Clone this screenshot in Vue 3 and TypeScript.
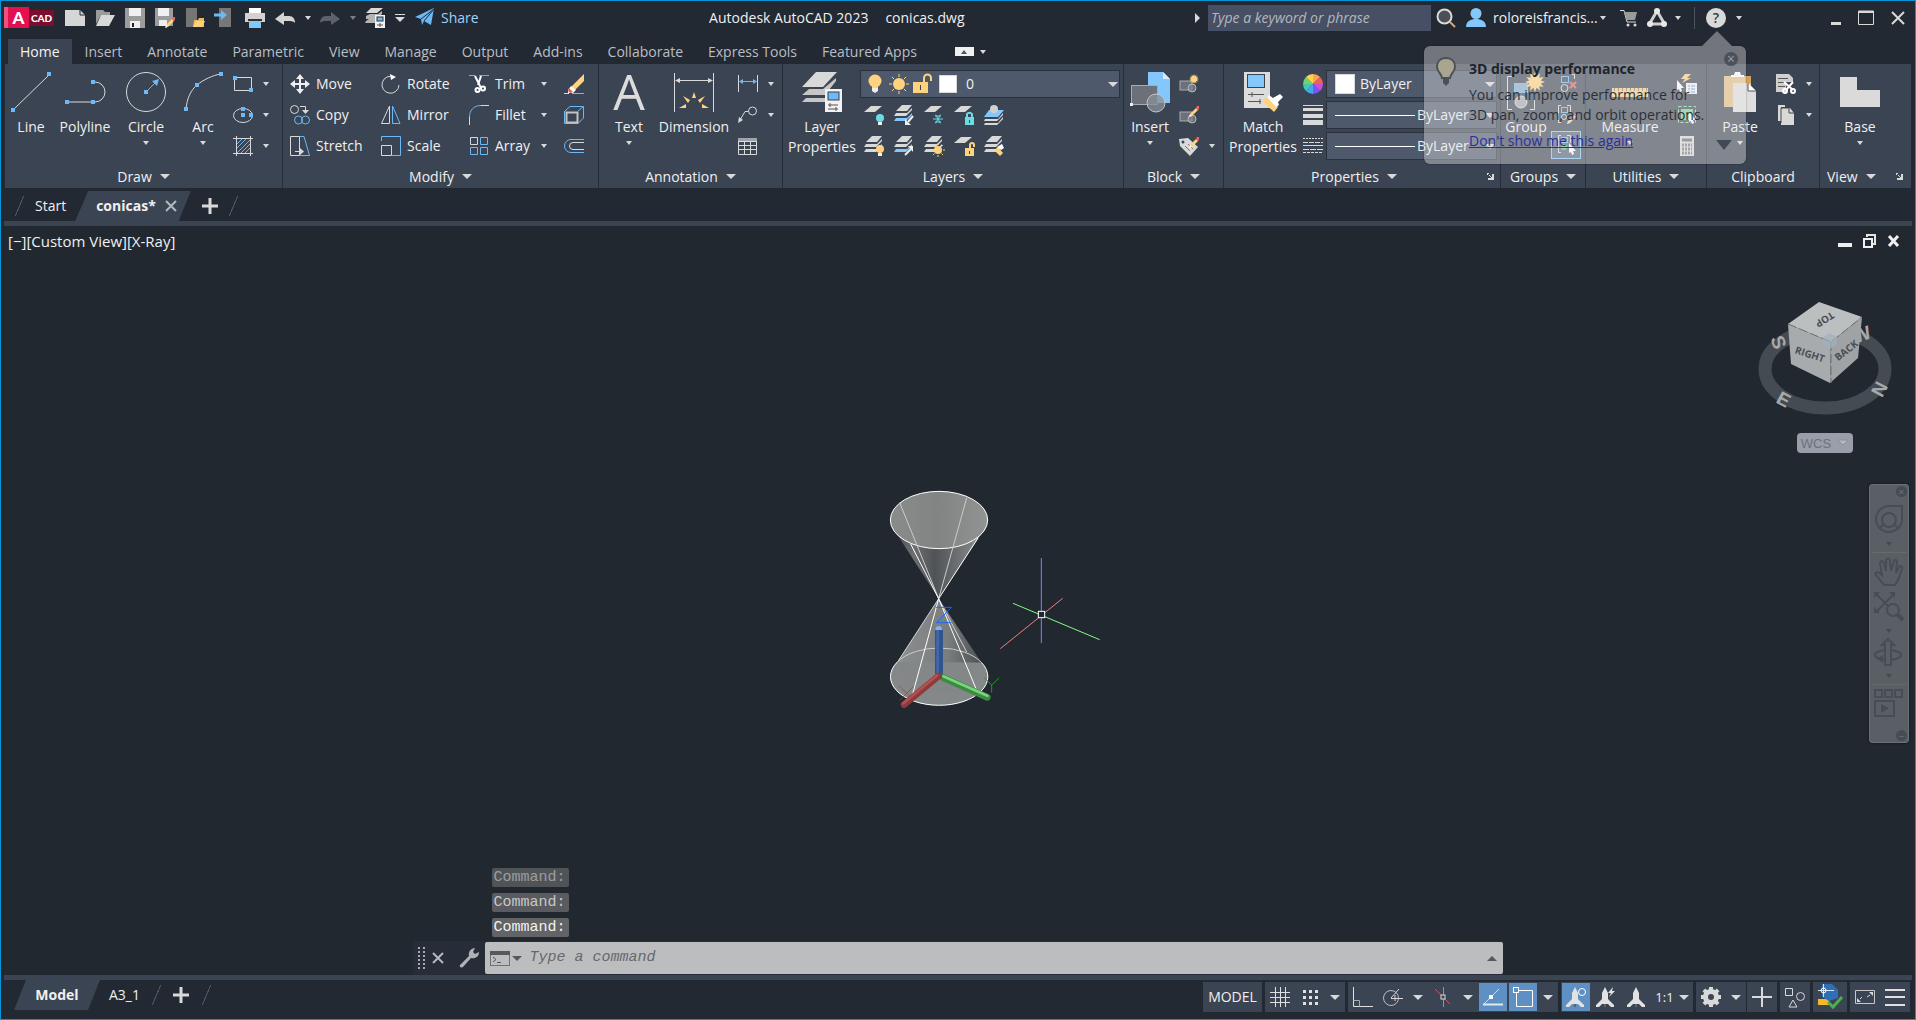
<script setup lang="ts">
import { h, ref, type FunctionalComponent } from 'vue'

const G = '#d9d9d9'
const B = '#6cb9f5'
const Y = '#ffd27d'
const sq = (x: number, y: number) => `<rect x="${x - 2}" y="${y - 2}" width="4" height="4" fill="${B}"/>`
const line = (d: string, c = G, w = 1) => `<path d="${d}" fill="none" stroke="${c}" stroke-width="${w}"/>`
const fill = (d: string, c = G) => `<path d="${d}" fill="${c}"/>`
const sheet = (y: number, c = G) => fill(`M7 ${y}H18L11 ${y + 6}H0Z`, c)
const stack = (c = G) =>
  fill('M8 0H18L13 6H2Z') + fill('M2 8H13L18 3V5L12 11H0Z') + fill('M2 13H13L18 8V10L12 16H0Z', c)
const bulb = (c: string) =>
  `<circle cx="16" cy="13" r="4" fill="${c}"/><rect x="14" y="17" width="4" height="3" fill="#eee"/>`
const rays = (cx: number, cy: number, a: number, b: number, n: number) =>
  Array.from({ length: n }, (_, i) => {
    const t = (i * 2 * Math.PI) / n
    const p = (r: number) => `${(cx + r * Math.cos(t)).toFixed(1)} ${(cy + r * Math.sin(t)).toFixed(1)}`
    return `M${p(a)}L${p(b)}`
  }).join('')
const star = (cx: number, cy: number, R: number, r: number) =>
  `<polygon fill="${Y}" points="${Array.from({ length: 24 }, (_, i) => {
    const t = (i * Math.PI) / 12
    const q = i % 2 ? r : R
    return `${(cx + q * Math.cos(t)).toFixed(1)},${(cy + q * Math.sin(t)).toFixed(1)}`
  }).join(' ')}"/>`
const pencil = fill('M11 9L17 3L19 5L13 11Z', Y) + fill('M17 3L18 1L20 1V4L19 5Z', '#f06464') + fill('M11 9L13 11L10 12Z', '#fff')
const block = `<rect x="1" y="7" width="12" height="9" fill="#6b7079" stroke="#a9adb3"/><circle cx="13" cy="14" r="4" fill="#80858d" fill-opacity=".7" stroke="#b4b8bd"/>`
const cursor = (x: number, y: number) =>
  fill(`M${x} ${y}L${x + 7} ${y + 8}H${x + 4}L${x + 5} ${y + 11}L${x + 3} ${y + 12}L${x + 2} ${y + 9}L${x} ${y + 10}Z`, '#fff')
const lockBody = (c: string, open: boolean) =>
  `<rect x="11" y="12" width="9" height="8" fill="${c}"/><rect x="15" y="15" width="1" height="3" fill="#3b4453"/>` +
  line(open ? 'M16 12V9a2 2 0 0 1 4 0V11' : 'M13 12V9a3 3 0 0 1 5 0V12', c, 2)
const scale = (x: number) => `<path transform="translate(${x} 0)" d="M9 0L12 6V12L18 18V20H15L12 17H6L3 20H0V18L6 12V6Z" fill="#e2e2e2"/><path transform="translate(${x} 0)" d="M8 17H10V20H8Z" fill="#5a6270"/>`

const icons: Record<string, string> = {
  line: line('M2 38L39 2') + sq(2, 38) + sq(38, 2),
  polyline: line('M2 30H30a10 10 0 0 0 0 -20H27') + sq(2, 30) + sq(28, 30) + sq(28, 10),
  circle: `<circle cx="20" cy="20" r="19.5" fill="none" stroke="${G}"/>` + sq(20, 20) + line('M20 20L31 9', B) + fill('M33 7L26 9L31 14Z', B),
  arc: line('M3 37C4 26 8 18 14 13S30 3 38 2') + sq(3, 37) + sq(14, 13) + sq(38, 2),
  rect: line('M1.500 3.500H18.500V16.500H1.500Z') + sq(2, 4) + sq(18, 16),
  ellipse: `<ellipse cx="10" cy="10.500" rx="9.500" ry="7" fill="none" stroke="${G}"/>` + sq(10, 4) + sq(10, 10) + sq(18, 10),
  hatch: line('M3.500 0V20M17.500 0V20M0 2.500H20M0 17.500H20') + line('M4 8L9 3M4 12L13 3M4 17L17 4M8 17L17 8M12 17L17 12', B),
  move: fill('M10 0L14 5H11V9H15V6L20 10L15 14V11H11V15H14L10 20L6 15H9V11H5V14L0 10L5 6V9H9V5H6Z', '#f0f0f0'),
  copy: `<circle cx="4.500" cy="4.500" r="4" fill="none" stroke="${G}"/><g fill="none" stroke="${B}"><circle cx="8.500" cy="15" r="4"/><circle cx="15.500" cy="15" r="4"/></g>` + line('M10 1.500H15.500V6') + fill('M12 5H19L15.500 9Z'),
  stretch: line('M.5 .5H9.500V19.500H.5Z') + line('M10 .5H14L19.500 19.500H10', B) + line('M5 15.500H11') + fill('M10 12L14 15.500L10 19Z'),
  rotate: line('M13 3A8.500 8.500 0 1 0 18 11') + fill('M9 0L15 3L10 6Z', '#fff'),
  mirror: line('M8.500 1V18.500H.5Z') + line('M11.500 1V18.500H19Z', B),
  scale: line('M.5 5V.5H19.500V19.500H11', B) + line('M.5 9.500H10.500V19.500H.5Z'),
  trim: line('M0 1.500H6', B) + line('M10 1.500H20', '#9aa0a8') + line('M6 2L12 14M12 2L9 11', '#fff', 2) + `<g fill="none" stroke="#fff" stroke-width="2"><circle cx="8.500" cy="16" r="2"/><circle cx="14" cy="14.500" r="2"/></g>`,
  fillet: line('M12 .5H20M.5 12V20') + line('M.5 12C.5 5 5 .5 12 .5', B),
  array: line('M1.500 1.500H8.500V8.500H1.500Z') + line('M11.500 1.500H18.500V8.500H11.500ZM1.500 11.500H8.500V18.500H1.500ZM11.500 11.500H18.500V18.500H11.500Z', B),
  erase: line('M0 19.500H5') + line('M8 19.500H20', B) + fill('M7 13L20 0V7L11 16Z', Y) + fill('M7 12L12 16L9 19H4V16Z', '#fff') + fill('M5 14L9 18L6 19L4 17Z', '#f05a5a'),
  explode: line('M.5 6.500L6 1.500H19.500V13L14 18.500M14 6L19 2M.5 6V18.500H14', B) + line('M2.500 7.500H13.500V17.500H2.500Z', '#c4c4c4', 2),
  offset: line('M20 3.500H7a6.500 6.500 0 0 0 0 13H20', B) + line('M20 6.500H9a3.500 3.500 0 0 0 0 7H20'),
  dim: line('M.5 1V40M39.500 1V40') + line('M2 8.500H38') + fill('M1 8.500L6 6V11ZM39 8.500L34 6V11Z') +
    `<g fill="${Y}"><path d="M18 26L20 20L22 26Z"/><path d="M9 24L16 28L14 31Z"/><path d="M31 24L24 28L26 31Z"/><path d="M5 36L12 32V36Z"/><path d="M35 36L28 32V36Z"/></g>`,
  linear: line('M.5 1V18M19.500 1V18') + line('M2 7.500H18', B) + fill('M1 7.500L5 5V10ZM19 7.500L15 5V10Z', B),
  leader: `<circle cx="14.500" cy="6" r="4" fill="none" stroke="${G}"/>` + line('M10 6.500H7L2 15') + fill('M0 18L1 12L5 15Z'),
  table: line('M.5 2.500H18.500V18.500H.5ZM0 5.500H19M0 9.500H19M0 13.500H19M6.500 6V18M12.500 6V18') + fill('M0 2H19V5H0Z', '#a0a4aa'),
  layers: fill('M14 0H35L21 15H0Z') + fill('M0 23L7 17H21L34 6V9L23 23ZM0 30L4 26H23V30Z', '#c6c6c6') +
    `<rect x="23" y="17" width="17" height="23" fill="#f2f2f2"/><rect x="26" y="20" width="11" height="8" fill="#6cb9f5" stroke="#39424f"/><path d="M26 33H36M26 37H36" stroke="#555"/><path d="M28 31V35M34 35V39" stroke="#555"/>`,
  bulbBig: `<circle cx="10" cy="7" r="6.500" fill="${Y}"/><path d="M7 12H13V14H7Z" fill="${Y}"/><path d="M7 14H13V17L10 19L7 17Z" fill="#eee"/>`,
  sun: `<circle cx="10" cy="10" r="6" fill="${Y}"/>` + line(rays(10, 10, 7, 10, 8), Y),
  lockOpen: `<path d="M0 8H15V19H0Z" fill="${Y}"/>` + line('M11 8V4a3.500 3.500 0 0 1 7 0V7', Y, 2) + line('M7.500 11V16', '#3b4453'),
  lyOff: sheet(1) + bulb('#6ddbe3'),
  lyIso: stack('#84c8fb') + fill('M11 20V14L17 20Z', '#eee') + line('M14 17L19 11', '#eee', 2),
  lyFreeze: sheet(1) + line(rays(14, 14, 0, 5, 6) + 'M11 11H17M11 17H17', '#6ddbe3'),
  lyLock: sheet(1) + lockBody('#6ddbe3', false),
  lyMatch: fill('M5 5H20L14 12H0Z', '#84c8fb') + `<circle cx="10" cy="4" r="4" fill="#d0d0d0"/>` + fill('M1 14H14L19 8V10L13 16H0ZM1 18H14L19 12V14L13 20H0Z'),
  lyOn: stack() + bulb(Y),
  lyUniso: stack('#84c8fb') + fill('M14 10H19V16Z', '#eee') + line('M11 19L17 13', '#eee', 2),
  lyThaw: stack() + `<circle cx="14" cy="14" r="4" fill="${Y}"/>` + line(rays(14, 14, 5, 7, 8), Y),
  lyUnlock: sheet(1) + lockBody(Y, true),
  lyWalk: stack() + fill('M10 14L14 11L19 17L16 20Z', Y) + fill('M13 11L18 8L20 12L17 14Z', '#fff'),
  insert: fill('M18 0H33L40 7V31H18Z', '#84c8fb') + fill('M33 0V7H40Z', '#d6ecfd') +
    `<rect x="1.500" y="13.500" width="26" height="19" fill="#6b7079" stroke="#a9adb3"/><circle cx="26" cy="31" r="9" fill="#8b9098" fill-opacity=".75" stroke="#c4c7cb"/><rect x="0" y="31" width="3" height="3" fill="#eee"/>`,
  blkNew: block + star(15, 5, 5, 3),
  blkEdit: block + pencil,
  blkAttr: fill('M0 3L9 2L19 11L11 20L1 10Z') + `<circle cx="4" cy="6" r="1.500" fill="#3b4453"/>` + line('M6 10L11 15M9 8L14 13', '#777') + pencil,
  match: `<rect x="1" y="0" width="26" height="36" fill="#dcdcdc"/><rect x="4.500" y="2.500" width="17" height="13" fill="#84c8fb" stroke="#39424f"/><path d="M5 22.500H21M5 29.500H18M9 20V25M17 27V32" stroke="#555"/>` + fill('M19 29L25 24L35 35L31 40Z', Y) + fill('M26 23L30 26L37 22L40 25L35 30L36 33L33 35L24 25Z', '#fff'),
  wheel: ['#ffa64d', '#f0605a', '#c74fd6', '#7a55f5', '#42a5f5', '#3fc9b0', '#6fd36f', '#ffd24d'].map((c, i) => {
    const p = (k: number) => `${(10 + 10 * Math.sin((k * Math.PI) / 4)).toFixed(2)} ${(10 - 10 * Math.cos((k * Math.PI) / 4)).toFixed(2)}`
    return `<path d="M10 10L${p(i)}A10 10 0 0 1 ${p(i + 1)}Z" fill="${c}"/>`
  }).join(''),
  weights: fill('M0 0H20V1H0ZM0 3H20V6H0ZM0 9H20V13H0ZM0 15H20V20H0Z'),
  types: line('M0 2.500H20').replace('/>', ' stroke-dasharray="2 1"/>') + line('M0 6.500H20').replace('/>', ' stroke-dasharray="5 1"/>') + line('M0 9.500H20') + line('M0 13.500H20').replace('/>', ' stroke-dasharray="6 1"/>') + line('M0 16.500H20').replace('/>', ' stroke-dasharray="3 1"/>'),
  group: line('M6 4.500H1.500V37.500H6M24 37.500H28.500V22') + `<rect x="8.500" y="11.500" width="13" height="9" fill="#86a9c8" stroke="${B}"/><circle cx="15" cy="30" r="6" fill="#a4a8ad" stroke="${G}"/>` + star(29, 10, 10, 6),
  ungroup: line('M16 .5H18.500V5', G) + `<rect x="5.500" y="2.500" width="7" height="6" fill="none" stroke="${B}"/><circle cx="8.500" cy="14" r="3.500" fill="none" stroke="${G}"/>` + line('M14 8L20 14M20 8L14 14', '#f0605a', 2),
  groupEdit: line('M5 .5H2.500V17.500H5M11 .5H14.500V8') + `<rect x="5.500" y="2.500" width="6" height="5" fill="none" stroke="${B}"/><circle cx="8" cy="12" r="2.500" fill="none" stroke="${G}"/>` + `<g transform="translate(1 7)">${pencil}</g>`,
  groupSel: line('M5 .5H2.500V17.500H5M11 .5H14.500V8') + `<rect x="5.500" y="2.500" width="6" height="5" fill="none" stroke="${B}"/><circle cx="8" cy="12" r="3" fill="#6bbf8c"/>` + cursor(13, 8),
  measure: fill('M0 16H36V25H0Z', '#f6cf86') + line('M2.500 16V19M6.500 16V19M10.500 16V19M14.500 16V19M18.500 16V19M22.500 16V19M26.500 16V19M30.500 16V19M34.500 16V19', '#8a7550'),
  quick: cursor(0, 6) + fill('M8 0H14L10 4H14L5 9L8 5H4Z', Y) + `<rect x="9" y="9" width="11" height="11" fill="#f2f2f2"/><path d="M11 12H13M14 12H18M11 15H13M14 15H18M11 18H13M14 18H18" stroke="#4a90d0"/>`,
  selAll: `<rect x="1.500" y="1.500" width="17" height="16" fill="none" stroke="#8fe0a8" stroke-dasharray="3 2"/><rect x="4" y="4" width="12" height="11" fill="#6fce92"/>` + cursor(12, 7),
  calc: `<rect x="3" y="0" width="14" height="20" fill="${G}"/><path d="M5 4H15" stroke="#666" stroke-width="3"/><path d="M5 9H15M5 13H15M5 17H15" stroke="#777" stroke-width="3" stroke-dasharray="2 1"/>`,
  paste: fill('M4 4H31V35H4Z', '#e3bd84') + fill('M25 4H31V11H25Z', '#d5a35f') + fill('M11 5V3H14L15 0H20L21 3H24V5Z', '#fff') + fill('M13 11H28L36 19V40H13Z', '#dedede') + fill('M28 11V19H36Z', '#fff') + line('M28 11V19H36', '#555'),
  cut: fill('M0 0H13L17 4V8H10V18H0Z', '#cfcfcf') + line('M2 4.500H12M2 8.500H12M2 12.500H9', '#555') + line('M8 8L17 16M17 8L10 16', '#fff', 2) + `<g fill="none" stroke="#fff" stroke-width="2"><circle cx="9" cy="17" r="2"/><circle cx="17" cy="17" r="2"/></g>`,
  copyClip: fill('M2 0H9V2H5V16H2Z') + fill('M5 3H14L18 8V20H5Z') + line('M5 18V3H13', '#444') + line('M13 3V8H18', '#444'),
  base: fill('M0 5H17V18H40V35H0Z', '#dadada'),
  fnew: fill('M0 2H15L20 7V18H0Z', '#d6d6d6') + line('M15 2V7H20', '#222933'),
  fopen: fill('M1 2H8L10 4H15V7H6L1 16Z', '#9b9b9b') + fill('M6 7H20L14 18H1Z', '#d8d8d8'),
  fsave: fill('M0 0H20V20H0Z', '#9c9c9c') + fill('M4 0H16V8H4Z', '#f0f0f0') + fill('M5 13H15V20H5Z', '#eee') + fill('M7 15H9V19H7Z', '#222'),
  fsaveas: fill('M0 0H18V18H0Z', '#9c9c9c') + fill('M3 0H14V8H3Z', '#f0f0f0') + fill('M4 12H12V18H4Z', '#eee') + `<g transform="translate(0 8)">${pencil}</g>`,
  webopen: fill('M1 0H12V19H1Z', '#757575') + fill('M9 12H13L14 10H19V19H8Z', '#f0b955') + fill('M11 13H20L17 19H8Z', Y),
  websave: fill('M4 0H16V19H4Z', '#777') + line('M-1 7H7', B, 3) + fill('M6 2L12 7L6 12Z', B),
  print: fill('M4 0H16V5H4Z', '#fff') + fill('M0 5H20V14H0Z', '#d2d2d2') + fill('M3 11H17V13H3Z', '#333') + fill('M4 13H16V20H4Z', '#84c8fb'),
  undo: fill('M0 11L9 4V8H14C18 8 20 11 20 15C18 13 16 13 9 13V17Z', '#d4d4d4'),
  redo: fill('M20 11L11 4V8H6C2 8 0 11 0 15C2 13 4 13 11 13V17Z', '#5d626a'),
  batch: fill('M6 0H18L12 5H1Z') + fill('M1 8L5 6H13L17 3V6L10 11H1ZM1 13L4 11H10V15H0Z', '#b5b5b5') + `<rect x="10" y="7" width="10" height="13" fill="#f2f2f2"/><rect x="12" y="9" width="6" height="4" fill="${B}" stroke="#333"/><path d="M12 17H18M15 15V19" stroke="#555"/>`,
  share: fill('M0 9L19 0L16 17L9 13L7 17L6 11Z', B) + line('M6 11L19 1L9 13', '#222933'),
  lens: `<circle cx="7.500" cy="8.500" r="7" fill="#4b4f58" stroke="${G}" stroke-width="2"/>` + line('M13 14L18 19', '#d9a76a', 2),
  user: `<circle cx="10" cy="5.500" r="5.500" fill="#84c8fb"/>` + fill('M0 19C0 13 5 11 10 11S20 13 20 19Z', '#84c8fb'),
  cart: line('M0 2.500H4L7 14H16', G) + fill('M4 4H17L15 12H7Z', '#9a9a9a') + `<circle cx="8" cy="17" r="1.500" fill="${G}"/><circle cx="15" cy="17" r="1.500" fill="${G}"/>`,
  aapp: line('M10 3L3 15M10 3L17 15M3 16H17', '#cfcfcf', 3) + `<g fill="#e8e8e8"><circle cx="10" cy="3" r="3"/><circle cx="3" cy="16" r="3"/><circle cx="17" cy="16" r="3"/></g>`,
  min: fill('M1 12H11V15H1Z'),
  max: line('M.5 1H15.500V14.500H.5Z') + line('M0 2H16', G, 2),
  close: line('M1 2L13 14M13 2L1 14', G, 2),
  vmin: fill('M0 9H14V13H0Z', '#eee'),
  vrestore: line('M4 3V1H12V10H10', '#e4e4e4', 2) + line('M1 5H9V13H1Z', '#f0f0f0', 2),
  vclose: line('M2 2L11 12M11 2L2 12', '#f0f0f0', 3),
  cross: line('M0 0L10 10M10 0L0 10', '#b4b8be', 2),
  plus: line('M8 0V16M0 8H16', G, 3),
  launch: line('M0 .5H2M.5 1V2M2 2L6 6', G) + fill('M7 1V7H1V5H5V1Z'),
  grid: line('M5.500 0V20M10.500 0V20M15.500 0V20M0 5.500H20M0 10.500H20M0 15.500H20', '#e0e0e0'),
  snap: [3, 9, 15].map((x) => [3, 9, 15].map((y) => fill(`M${x} ${y}h3v3h-3Z`, '#e0e0e0')).join('')).join(''),
  ortho: line('M.5 0V19.500H20', '#e0e0e0') + line('M.5 13.500H6.500V19.500', '#a9adb3'),
  polar: `<circle cx="8" cy="11" r="7.500" fill="none" stroke="#b9bcc1"/>` + line('M8 11.500H20M8 11L16 2') + line('M12 8V14'),
  iso: line('M2 2L17 17', '#c9555c') + line('M10.500 0V20', '#4fbf6b') + `<rect x="8" y="8" width="4" height="4" fill="#3b4453" stroke="#ddd"/>`,
  otrack: line('M1 17L16 2') + line('M0 17.500H20', '#dfe7f0', 2) + fill('M6 8H10V12H6Z', '#fff'),
  osnap: line('M3.500 3.500H19.500V19.500H3.500Z', '#fff') + `<rect x=".5" y=".5" width="5" height="5" fill="#5f90c3" stroke="#fff"/>`,
  ann1: scale(0) + `<circle cx="16" cy="5" r="3.500" fill="none" stroke="#fff"/>`,
  ann2: scale(0) + fill('M17 0L12 6H15L13 10L19 4H16Z', '#e2e2e2'),
  ann3: scale(1),
  gear: `<circle cx="10" cy="10" r="5.500" fill="none" stroke="${G}" stroke-width="5"/>` + line(rays(10, 10, 7, 10, 8), G, 4),
  bigplus: line('M10 0V20M0 10H20', G, 2),
  shapes: line('M.5 1.500H7.500V8.500H.5Z') + `<circle cx="15.500" cy="9.500" r="4" fill="none" stroke="${G}"/>` + line('M8 13L12 20H4Z'),
  dwg: fill('M1 15H12V21H1Z', '#f5b82a') + fill('M5 0H15L21 6V14L12 17L5 13Z', '#2f6fb5') + line('M1 6.500H17M6.500 0V13', '#cfe4fa') + `<circle cx="6.500" cy="6.500" r="2.500" fill="none" stroke="#fff"/>` + line('M11 18L16 23L25 13', '#4fae4f', 3),
  full: line('M.5 3.500H19.500V16.500H.5Z', '#c8c8c8') + fill('M14 5H18V9ZM2 11V15H6Z') + line('M15 8L12 10M5 12L7 10'),
  menu: line('M0 3H20M0 10H20M0 18H20', '#e0e0e0', 2),
  wrench: fill('M1 17L10 8C9 4 12 0 16 0L14 4L16 6L20 4C20 9 16 11 12 10L4 19C2 20 0 19 1 17Z', '#aeb2b6'),
  terminal: `<rect x=".5" y=".5" width="19" height="14" fill="none" stroke="#6d7074"/><path d="M0 0H20V4H0Z" fill="#55585c"/><path d="M3 6L6 8.500L3 11M7 11.500H11" fill="none" stroke="#55585c"/>`,
  bulbTip: `<path d="M10 1C4 1 1 5 1 10C1 15 6 17 6 21H14C14 17 19 15 19 10C19 5 16 1 10 1Z" fill="#a9a58f" stroke="#4d5157" stroke-width="2"/><path d="M7 21H13V26L10 29L7 26Z" fill="#4d5157"/>`,
  nwheel: `<path d="M15 1H28V15A13 13 0 1 1 15 1Z" fill="none" stroke="#474d56" stroke-width="2"/><circle cx="15" cy="15" r="7" fill="none" stroke="#474d56" stroke-width="2"/><path d="M9 20L5 24M21 20L25 24" stroke="#474d56" stroke-width="2"/>`,
  nhand: `<path d="M9 27C6 23 4 20 1 17C2 14 5 15 8 18L6 6C7 3 9 4 10 6L12 14L12 3C13 1 15 1 16 3L17 14L20 4C21 2 23 3 23 5L22 16L25 10C27 8 29 9 28 12L24 23L21 28H11Z" fill="none" stroke="#474d56" stroke-width="2"/>`,
  nzoom: `<path d="M2 2L20 20M20 2L2 20" stroke="#474d56" stroke-width="2"/><path d="M0 0H6L0 6ZM21 0V6L15 0ZM0 21V15L6 21Z" fill="#474d56"/><circle cx="19" cy="18" r="6" fill="#5a5f65" stroke="#474d56" stroke-width="2"/><path d="M23 22L29 28" stroke="#474d56" stroke-width="4"/>`,
  norbit: `<ellipse cx="14" cy="17" rx="13" ry="5" fill="none" stroke="#474d56" stroke-width="2"/><path d="M11 27V7H8L14 1L20 7H17V27Z" fill="#5a5f65" stroke="#474d56" stroke-width="2"/><path d="M3 21L9 17V25Z" fill="#474d56"/>`,
  nmotion: `<path d="M1 1H8V8H1ZM11 1H18V8H11ZM21 1H28V8H21ZM1 12H20V27H1Z" fill="none" stroke="#474d56" stroke-width="2"/><path d="M7 15L15 19.500L7 24Z" fill="#474d56"/>`,
}

interface IcoProps { n: string; w?: number; hh?: number }
const Ico: FunctionalComponent<IcoProps> = (p) =>
  h('svg', {
    class: 'ico', width: p.w ?? 20, height: p.hh ?? p.w ?? 20,
    viewBox: `0 0 ${p.w ?? 20} ${p.hh ?? p.w ?? 20}`, 'aria-hidden': 'true', innerHTML: icons[p.n],
  })
Ico.props = ['n', 'w', 'hh']

const ribbonTabs = ['Home', 'Insert', 'Annotate', 'Parametric', 'View', 'Manage', 'Output', 'Add-ins', 'Collaborate', 'Express Tools', 'Featured Apps']
const activeTab = ref('Home')
const quick = [['fnew', 'New'], ['fopen', 'Open'], ['fsave', 'Save'], ['fsaveas', 'Save As'], ['webopen', 'Open from Web'], ['websave', 'Save to Web'], ['print', 'Plot'], ['undo', 'Undo']]
const modify = [
  [['move', 'Move'], ['copy', 'Copy'], ['stretch', 'Stretch']],
  [['rotate', 'Rotate'], ['mirror', 'Mirror'], ['scale', 'Scale']],
]
const modifySplit = [['trim', 'Trim'], ['fillet', 'Fillet'], ['array', 'Array']]
const layerRows = [
  [['lyOff', 'Off'], ['lyIso', 'Isolate'], ['lyFreeze', 'Freeze'], ['lyLock', 'Lock'], ['lyMatch', 'Match Layer']],
  [['lyOn', 'Turn All Layers On'], ['lyUniso', 'Unisolate'], ['lyThaw', 'Thaw'], ['lyUnlock', 'Unlock'], ['lyWalk', 'Change to Current']],
]
const history = ['Command:', 'Command:', 'Command:']
const keyword = ref('')
const command = ref('')
</script>

<template>
  <div class="app">
    <header class="titlebar">
      <button class="logo" aria-label="Application menu"><span class="logo-a">A</span><span class="logo-cad">CAD</span></button>
      <div class="quick">
        <button v-for="q in quick" :key="q[0]" :aria-label="q[1]"><Ico :n="q[0]" /></button>
        <button class="tiny" aria-label="Undo list"><i class="car" /></button>
        <button aria-label="Redo"><Ico n="redo" /></button>
        <button class="tiny" aria-label="Redo list"><i class="car dim" /></button>
        <button aria-label="Batch Plot"><Ico n="batch" /></button>
        <button class="custom" aria-label="Customize Quick Access Toolbar"><i class="car big" /></button>
        <button class="share"><Ico n="share" />Share</button>
      </div>
      <h1 class="doc-title"><span>Autodesk AutoCAD 2023</span><span>conicas.dwg</span></h1>
      <button class="expand" aria-label="Collapse search"><i class="car right" /></button>
      <input v-model="keyword" class="search" type="search" placeholder="Type a keyword or phrase" aria-label="Search" />
      <button class="lens" aria-label="Find"><Ico n="lens" /></button>
      <button class="user"><Ico n="user" /><span>roloreisfrancis...</span><i class="car" /></button>
      <button class="cart" aria-label="App Store"><Ico n="cart" :w="18" :hh="20" /></button>
      <button class="apps" aria-label="Autodesk App Store"><Ico n="aapp" /><i class="car" /></button>
      <i class="vsep" />
      <div class="help">
        <button class="help-btn" aria-label="Help">?</button>
        <aside class="balloon">
          <Ico class="tip-bulb" n="bulbTip" :w="20" :hh="30" />
          <h2>3D display performance</h2>
          <p>You can improve performance for<br />3D pan, zoom, and orbit operations.</p>
          <a href="#">Don't show me this again</a>
          <button class="tip-close" aria-label="Close notification">×</button>
          <i class="tip-more" />
        </aside>
      </div>
      <button class="help-more" aria-label="Help menu"><i class="car" /></button>
      <div class="win">
        <button aria-label="Minimize"><Ico n="min" :w="11" :hh="16" /></button>
        <button aria-label="Maximize"><Ico n="max" :w="16" /></button>
        <button aria-label="Close"><Ico n="close" :w="14" :hh="16" /></button>
      </div>
    </header>

    <nav class="rtabs">
      <button v-for="t in ribbonTabs" :key="t" :class="{ on: t === activeTab }" @click="activeTab = t">{{ t }}</button>
      <button class="collapse" aria-label="Minimize ribbon"><span><i class="car up" /></span><i class="car" /></button>
    </nav>

    <section class="ribbon">
      <div class="panel">
        <div class="body">
          <button class="big w52"><Ico n="line" :w="40" />Line</button>
          <button class="big w56"><Ico n="polyline" :w="40" />Polyline</button>
          <button class="big w66"><Ico n="circle" :w="40" />Circle<i class="car" /></button>
          <button class="big w48"><Ico n="arc" :w="40" />Arc<i class="car" /></button>
          <div class="col pad6">
            <button v-for="n in ['rect', 'ellipse', 'hatch']" :key="n" class="small" :aria-label="n"><Ico :n="n" /><i class="car" /></button>
          </div>
        </div>
        <button class="ptitle">Draw<i class="car big" /></button>
      </div>

      <div class="panel">
        <div class="body modify">
          <div v-for="(c, i) in modify" :key="i" class="col" :class="'mc' + i">
            <button v-for="m in c" :key="m[0]" class="small text"><Ico :n="m[0]" />{{ m[1] }}</button>
          </div>
          <div class="col mc2">
            <button v-for="m in modifySplit" :key="m[0]" class="small text"><Ico :n="m[0]" /><span class="split">{{ m[1] }}</span><i class="car" /></button>
          </div>
          <div class="col">
            <button v-for="n in ['erase', 'explode', 'offset']" :key="n" class="small" :aria-label="n"><Ico :n="n" /></button>
          </div>
        </div>
        <button class="ptitle">Modify<i class="car big" /></button>
      </div>

      <div class="panel">
        <div class="body annot">
          <button class="big w52"><span class="glyph-a">A</span>Text<i class="car" /></button>
          <button class="big w78"><Ico n="dim" :w="40" />Dimension</button>
          <div class="col pad5">
            <button v-for="n in ['linear', 'leader', 'table']" :key="n" class="small" :aria-label="n"><Ico :n="n" /><i v-if="n !== 'table'" class="car" /></button>
          </div>
        </div>
        <button class="ptitle">Annotation<i class="car big" /></button>
      </div>

      <div class="panel">
        <div class="body two">
          <button class="big w68"><Ico n="layers" :w="40" />Layer<br />Properties</button>
          <div class="col grow">
            <div class="combo layer">
              <Ico n="bulbBig" /><Ico n="sun" /><Ico n="lockOpen" /><b class="swatch" />
              <select aria-label="Layer"><option>0</option></select><i class="car big" />
            </div>
            <div v-for="(r, i) in layerRows" :key="i" class="lrow">
              <button v-for="l in r" :key="l[0]" class="small" :aria-label="l[1]"><Ico :n="l[0]" /></button>
            </div>
          </div>
        </div>
        <button class="ptitle">Layers<i class="car big" /></button>
      </div>

      <div class="panel">
        <div class="body">
          <button class="big w52"><Ico n="insert" :w="40" />Insert<i class="car" /></button>
          <div class="col pad3">
            <button v-for="n in ['blkNew', 'blkEdit', 'blkAttr']" :key="n" class="small" :aria-label="n"><Ico :n="n" /><i v-if="n === 'blkAttr'" class="car" /></button>
          </div>
        </div>
        <button class="ptitle">Block<i class="car big" /></button>
      </div>

      <div class="panel">
        <div class="body two">
          <button class="big w68"><Ico n="match" :w="40" />Match<br />Properties</button>
          <div class="col grow props">
            <label class="prow"><Ico n="wheel" /><span class="combo"><b class="swatch" /><select aria-label="Object Color"><option>ByLayer</option></select><i class="car big" /></span></label>
            <label class="prow"><Ico n="weights" /><span class="combo"><i class="rule" /><select aria-label="Lineweight"><option>ByLayer</option></select><i class="car big" /></span></label>
            <label class="prow"><Ico n="types" /><span class="combo"><i class="rule" /><select aria-label="Linetype"><option>ByLayer</option></select><i class="car big" /></span></label>
          </div>
        </div>
        <div class="ptitle prop"><button class="pt">Properties<i class="car big" /></button><button class="launch" aria-label="Properties settings"><Ico n="launch" :w="7" /></button></div>
      </div>

      <div class="panel">
        <div class="body">
          <button class="big w50"><Ico n="group" :w="40" />Group</button>
          <div class="col tools">
            <button class="small" aria-label="Ungroup"><Ico n="ungroup" /></button>
            <button class="small" aria-label="Group Edit"><Ico n="groupEdit" /></button>
            <button class="small sel" aria-label="Group Selection On/Off"><Ico n="groupSel" /></button>
          </div>
        </div>
        <button class="ptitle">Groups<i class="car big" /></button>
      </div>

      <div class="panel">
        <div class="body">
          <button class="big w88"><Ico n="measure" :w="36" :hh="40" />Measure<i class="car" /></button>
          <div class="col pad3">
            <button v-for="n in ['quick', 'selAll', 'calc']" :key="n" class="small" :aria-label="n"><Ico :n="n" /></button>
          </div>
        </div>
        <button class="ptitle">Utilities<i class="car big" /></button>
      </div>

      <div class="panel">
        <div class="body">
          <button class="big w66"><Ico n="paste" :w="40" />Paste<i class="car" /></button>
          <div class="col pad3">
            <button class="small" aria-label="Cut"><Ico n="cut" /><i class="car" /></button>
            <button class="small" aria-label="Copy Clip"><Ico n="copyClip" /><i class="car" /></button>
          </div>
        </div>
        <div class="ptitle">Clipboard</div>
      </div>

      <div class="panel">
        <div class="body">
          <button class="big w80"><Ico n="base" :w="40" />Base<i class="car" /></button>
        </div>
        <div class="ptitle view"><button class="pt">View<i class="car big" /></button><button class="launch" aria-label="View settings"><Ico n="launch" :w="7" /></button></div>
      </div>
    </section>

    <nav class="dtabs">
      <i class="slash" />
      <button class="start">Start</button>
      <div class="dactive"><button>conicas*</button><button aria-label="Close drawing"><Ico n="cross" :w="10" /></button></div>
      <button class="add" aria-label="New drawing"><Ico n="plus" :w="16" /></button>
      <i class="slash" />
    </nav>

    <div class="strip" />
    <main class="viewport">
      <div class="vp-head">
        <button>[−][Custom View][X-Ray]</button>
        <div class="vp-win">
          <button aria-label="Minimize view"><Ico n="vmin" :w="14" /></button>
          <button aria-label="Restore view"><Ico n="vrestore" :w="13" :hh="14" /></button>
          <button aria-label="Close view"><Ico n="vclose" :w="13" :hh="14" /></button>
        </div>
      </div>

      <svg class="scene" width="260" height="260" viewBox="0 0 780 780" role="img" aria-label="Double cone">
        <defs>
          <linearGradient id="c1"><stop offset="0" stop-color="#4e5256" /><stop offset=".2" stop-color="#6d7072" /><stop offset=".45" stop-color="#505356" /><stop offset="1" stop-color="#8b8d8e" /></linearGradient>
          <linearGradient id="c2"><stop offset="0" stop-color="#8c8e8f" /><stop offset=".6" stop-color="#7a7d7e" /><stop offset="1" stop-color="#4c5054" /></linearGradient>
          <linearGradient id="c3"><stop offset="0" stop-color="#8a8c8c" /><stop offset=".5" stop-color="#828484" /><stop offset="1" stop-color="#929494" /></linearGradient>
        </defs>
        <path d="M112 194L236 386L362 194Z" fill="url(#c1)" />
        <ellipse cx="237" cy="150" rx="146" ry="86" fill="url(#c3)" stroke="#fff" stroke-width="3" />
        <path d="M119 98L236 386L320 84" fill="none" stroke="#c9cbcc" stroke-width="3" />
        <path d="M152 222L236 386L354 204" fill="none" stroke="#fff" stroke-width="3" />
        <ellipse cx="237" cy="620" rx="146" ry="86" fill="#858888" />
        <path d="M112 576L236 386L365 578Z" fill="url(#c2)" />
        <path d="M112 576L150 668L320 668L365 578Z" fill="#848787" />
        <path d="M112 576A146 86 0 0 1 365 578" fill="none" stroke="#c9cbcc" stroke-width="3" />
        <path d="M112 576A146 86 0 1 0 365 578" fill="none" stroke="#fff" stroke-width="3" />
        <path d="M236 386L114 574M236 386L320 546" stroke="#d0d2d3" stroke-width="3" />
        <path d="M236 386L158 672M236 386L348 656" stroke="#fff" stroke-width="3" />
        <path d="M228 412H274L230 458H274" fill="none" stroke="#1b6af0" stroke-width="3" />
        <path d="M237 478V612" stroke="#31548f" stroke-width="24" />
        <path d="M233 478V612" stroke="#4268aa" stroke-width="8" />
        <path d="M225 480L230 469H242L248 480Z" fill="#7fb4f0" />
        <path d="M248 622L382 682" stroke="#3d8a42" stroke-width="20" stroke-linecap="round" />
        <path d="M250 619L382 677" stroke="#78d67a" stroke-width="8" stroke-linecap="round" />
        <path d="M236 618L132 704" stroke="#8d3a3d" stroke-width="20" stroke-linecap="round" />
        <path d="M232 616L130 700" stroke="#b45052" stroke-width="8" stroke-linecap="round" />
        <path d="M118 648L162 692M162 648L118 692" stroke="#e02020" stroke-width="2" />
        <path d="M372 622L395 645L417 624M395 645V668" fill="none" stroke="#18a018" stroke-width="3" />
        <path d="M544 264V519" stroke="#8080ff" stroke-width="3" />
        <path d="M421 536L608 385" stroke="#f08080" stroke-width="3" />
        <path d="M459 400L719 509" stroke="#80ff80" stroke-width="3" />
        <rect x="535" y="424" width="19" height="19" fill="#212830" stroke="#fff" stroke-width="3" />
      </svg>

      <div class="cube">
        <svg width="160" height="120" viewBox="1750 295 160 120" role="img" aria-label="ViewCube">
          <ellipse cx="1825" cy="369" rx="60" ry="39" fill="none" stroke="#454b52" stroke-width="13" />
          <g class="compass">
            <text x="1779" y="349" transform="rotate(70 1779 342)">S</text>
            <text x="1862" y="341" transform="rotate(-20 1862 335)">W</text>
            <text x="1784" y="406" transform="rotate(28 1784 399)">E</text>
            <text x="1879" y="396" transform="rotate(-62 1879 389)">N</text>
          </g>
          <path d="M1819 302L1862 317L1831 342L1788 324Z" fill="#bcbfc0" />
          <path d="M1788 324L1831 342L1830 383L1791 364Z" fill="#a8abad" />
          <path d="M1831 342L1862 317L1858 358L1830 383Z" fill="#a0a3a5" />
          <path d="M1788 324L1831 342L1862 317M1831 342V383" fill="none" stroke="#6d7073" stroke-dasharray="9 3" />
          <path d="M1823 337L1830 333L1837 337V344L1830 349L1823 346Z" fill="#9fb0bc" opacity=".7" />
          <g class="faces">
            <text x="1825" y="324" transform="rotate(148 1825 320)">TOP</text>
            <text x="1810" y="358" transform="rotate(18 1810 354)">RIGHT</text>
            <text x="1846" y="354" transform="rotate(-38 1846 350)">BACK</text>
          </g>
        </svg>
        <button class="wcs">WCS<svg width="12" height="8" viewBox="0 0 12 8" aria-hidden="true"><path d="M1 1H11L6 6Z" fill="#b5b8bf" stroke="#8b8f98" /></svg></button>
      </div>

      <div class="navbar">
        <button class="dot" aria-label="Close navigation bar">×</button>
        <button aria-label="Full Navigation Wheel"><Ico n="nwheel" :w="30" :hh="30" /><i class="car nav" /></button>
        <hr />
        <button aria-label="Pan"><Ico n="nhand" :w="30" :hh="30" /></button>
        <button aria-label="Zoom Extents"><Ico n="nzoom" :w="30" :hh="30" /><i class="car nav" /></button>
        <button aria-label="Orbit"><Ico n="norbit" :w="30" :hh="29" /><i class="car nav" /></button>
        <hr />
        <button aria-label="ShowMotion"><Ico n="nmotion" :w="30" :hh="29" /></button>
        <button class="dot last" aria-label="Customize navigation bar">−</button>
      </div>

      <div class="console">
        <div class="history"><span v-for="(c, i) in history" :key="i" :class="'h' + i">{{ c }}</span></div>
        <div class="cmd">
          <div class="cmd-tools">
            <i class="grip" />
            <button aria-label="Close command line"><Ico n="cross" :w="10" /></button>
            <button aria-label="Customize command line"><Ico n="wrench" /></button>
          </div>
          <div class="cmd-box">
            <button class="recent" aria-label="Recent commands"><Ico n="terminal" :w="20" :hh="15" /><i class="car big" /></button>
            <input v-model="command" type="text" placeholder="Type a command" aria-label="Command" />
            <button aria-label="Command history"><i class="car big up" /></button>
          </div>
        </div>
      </div>
    </main>
    <div class="strip" />

    <footer class="status">
      <div class="layouts">
        <button class="lactive">Model</button>
        <button class="layout">A3_1</button>
        <i class="slash" />
        <button class="add" aria-label="New layout"><Ico n="plus" :w="16" /></button>
        <i class="slash" />
      </div>
      <div class="sgroups">
        <div class="sg"><button class="model">MODEL</button></div>
        <div class="sg">
          <button aria-label="Grid"><Ico n="grid" /></button><button aria-label="Snap"><Ico n="snap" /></button><button class="nar" aria-label="Snap menu"><i class="car big" /></button>
        </div>
        <div class="sg">
          <button aria-label="Ortho"><Ico n="ortho" /></button><button aria-label="Polar"><Ico n="polar" /></button><button class="nar" aria-label="Polar menu"><i class="car big" /></button>
          <button aria-label="Isodraft"><Ico n="iso" /></button><button class="nar" aria-label="Isodraft menu"><i class="car big" /></button>
          <button class="hot" aria-label="Object snap tracking"><Ico n="otrack" /></button><button class="hot" aria-label="Object snap"><Ico n="osnap" /></button><button class="nar" aria-label="Object snap menu"><i class="car big" /></button>
        </div>
        <div class="sg">
          <button class="hot" aria-label="Annotation visibility"><Ico n="ann1" /></button><button aria-label="Auto scale"><Ico n="ann2" /></button><button aria-label="Annotation scale"><Ico n="ann3" /></button>
          <button class="ratio">1:1<i class="car big" /></button>
        </div>
        <div class="pair">
          <div class="sg"><button aria-label="Workspace"><Ico n="gear" /></button><button class="nar" aria-label="Workspace menu"><i class="car big" /></button></div>
          <div class="sg"><button aria-label="Annotation monitor"><Ico n="bigplus" /></button></div>
        </div>
        <div class="sg"><button aria-label="Isolate objects"><Ico n="shapes" /></button></div>
        <div class="sg"><button class="wide" aria-label="Trusted DWG"><Ico n="dwg" :w="26" /></button></div>
        <div class="sg"><button aria-label="Clean screen"><Ico n="full" /></button><button aria-label="Customization"><Ico n="menu" /></button></div>
      </div>
    </footer>
  </div>
</template>

<style>
body { margin: 0; background: #222933; }
</style>

<style scoped>
.app {
  box-sizing: border-box; min-height: 100vh; display: flex; flex-direction: column;
  border: 1px solid #0696d7; background: #222933; color: #f0f0f0;
  font: 14px/20px "Open Sans", "Noto Sans", sans-serif;
}
button, input, select { font: inherit; color: inherit; background: none; border: 0; padding: 0; margin: 0; }
button { display: flex; align-items: center; justify-content: center; white-space: nowrap; }
.ico { display: block; flex: none; overflow: visible; }
.car { flex: none; width: 0; height: 0; border: solid transparent; border-width: 4px 3px 0; border-top-color: #d9d9d9; }
.car.big { border-width: 5px 5px 0; padding: 0; }
.car.dim { border-top-color: #7a7f87; }
.car.right { border-width: 5px 0 5px 5px; border-color: transparent transparent transparent #d9d9d9; }
.car.up { border-width: 0 3px 4px; border-color: transparent transparent #555; }
.car.big.up { border-width: 0 5px 5px; }

.titlebar { display: flex; align-items: center; box-sizing: border-box; height: 35px; padding: 0 10px 2px 3px; }
.logo { margin-right: 11px; font-family: Lato, sans-serif; font-weight: 900; color: #fff; }
.logo-a { width: 25px; line-height: 21px; background: #e51050; border-left: 4px solid #f0507c; box-sizing: border-box; font-size: 17px; }
.logo-cad { width: 25px; line-height: 16px; background: #7d0d2d; font-size: 10px; }
.quick { display: flex; align-items: center; gap: 10px; }
.tiny { width: 5px; }
.custom { width: 10px; height: 20px; flex-direction: column; gap: 2px; }
.custom::before { content: ""; width: 10px; height: 1px; background: #d9d9d9; }
.share { gap: 6px; color: #9ed2f8; }
.doc-title { flex: 1; margin: 0; display: flex; justify-content: center; gap: 17px; font-size: 14px; font-weight: 400; white-space: nowrap; }
.expand { margin-right: 8px; }
.search { width: 223px; height: 26px; box-sizing: border-box; padding: 0 3px; background: #464f63; appearance: none; }
.search::placeholder { color: #b4b8c0; font-style: italic; opacity: 1; }
.lens { margin: 0 9px 0 6px; }
.user span { width: 105px; margin: 0 2px 0 7px; overflow: hidden; text-align: left; }
.cart { margin: 0 9px 0 14px; }
.apps { gap: 8px; }
.vsep { width: 1px; height: 22px; background: #4c5462; margin: 0 11px 0 13px; }
.help { position: relative; }
.help-btn { width: 20px; height: 20px; border-radius: 50%; background: #d9d9d9; color: #333a44; font-weight: 600; }
.help-more { margin-left: 10px; }
.win { display: flex; align-items: center; margin-left: 88px; }
.win button + button { margin-left: 17px; }

.balloon {
  position: absolute; z-index: 5; top: 38px; right: -20px; width: 322px; height: 118px; box-sizing: border-box;
  padding: 13px 0 0 45px; border-radius: 6px; color: #2b3038; background: rgba(235, 235, 235, .4); box-shadow: 0 0 2px rgba(0, 0, 0, .4);
}
.balloon::before {
  content: ""; position: absolute; right: 14px; bottom: 100%; border: solid transparent; border-width: 0 15px 15px;
  border-bottom-color: rgba(235, 235, 235, .4);
}
.balloon h2 { margin: 0 0 6px; font-size: 14px; line-height: 20px; color: #1e242d; }
.balloon p { margin: 0 0 6px; white-space: nowrap; }
.balloon a { color: #2a2fa0; }
.tip-bulb { position: absolute; left: 12px; top: 11px; }
.tip-close { position: absolute; right: 8px; top: 6px; width: 14px; height: 14px; border-radius: 50%; background: #4b5059; color: #9a9ea4; font-size: 14px; }
.tip-more { position: absolute; right: 14px; bottom: 14px; border: solid transparent; border-width: 10px 8px 0; border-top-color: #434953; }

.rtabs { display: flex; gap: 1px; height: 28px; padding-left: 7px; align-items: flex-end; }
.rtabs button { height: 25px; padding: 0 12px; color: #bbbec3; }
.rtabs .on { background: #3b4453; color: #f4f4f4; }
.rtabs .collapse { margin-left: 13px; gap: 6px; }
.collapse span { width: 19px; height: 9px; background: #f0f0f0; display: flex; align-items: center; justify-content: center; }

.ribbon {
  display: grid; grid-template-columns: 278fr 316fr 184fr 341fr 100fr 277fr 85fr 121fr 113fr 91fr;
  margin: 0 4px; background: #3b4453; height: 124px;
}
.panel { display: flex; flex-direction: column; position: relative; border-right: 1px solid #262d38; }
.panel:last-child { border-right: 0; }
.body { display: flex; height: 93px; padding: 5px 0 3px; }
.modify { padding-left: 7px; }
.annot { padding-left: 4px; }
.two { padding-left: 5px; }
.big { flex-direction: column; justify-content: flex-start; padding-top: 3px; line-height: 20px; }
.big .ico { margin-bottom: 5px; }
.big .car { margin-top: 4px; }
.w48 { width: 48px; }
.w50 { width: 50px; }
.w52 { width: 52px; }
.w56 { width: 56px; }
.w66 { width: 66px; }
.w68 { width: 68px; }
.w78 { width: 78px; }
.w80 { width: 80px; }
.w88 { width: 88px; }
.glyph-a { height: 40px; margin-bottom: 5px; overflow: hidden; font-size: 50px; line-height: 38px; color: #dcdcdc; }
.col { display: flex; flex-direction: column; gap: 1px; }
.small { height: 30px; gap: 10px; justify-content: flex-start; }
.small.text { gap: 6px; }
.mc0 { width: 91px; }
.mc1 { width: 88px; }
.mc2 { width: 95px; }
.split { width: 40px; text-align: left; }
.pad3 { padding-left: 3px; }
.pad5 { padding-left: 5px; }
.pad6 { padding-left: 6px; }
.grow { flex: 1; padding: 0 3px 0 4px; }
.lrow { display: flex; gap: 10px; padding-left: 4px; }
.combo { display: flex; align-items: center; height: 28px; box-sizing: border-box; padding: 0 1px 0 8px; background: #4e596c; border: 1px solid #2a313c; }
.combo.layer { margin: 1px 0; gap: 4px; padding-left: 4px; }
.combo select { flex: 1; min-width: 0; appearance: none; padding-left: 5px; outline: 0; }
.swatch { flex: none; width: 18px; height: 18px; background: #fff; border: 1px solid #d8d8d8; box-sizing: border-box; }
.layer .swatch { margin-left: 2px; }
.props .swatch { width: 20px; height: 20px; }
.rule { flex: none; width: 80px; height: 1px; background: #fff; }
.combo .rule + select { padding-left: 2px; }
.props { padding-left: 6px; }
.prow { display: flex; align-items: center; gap: 3px; height: 30px; }
.prow .combo { flex: 1; min-width: 0; }
.tools { align-items: center; }
.sel { height: 28px; width: 30px; box-sizing: border-box; border: 1px solid #84c8fb; background: #50627a; justify-content: center; }
.ptitle { display: flex; align-items: center; justify-content: center; gap: 8px; height: 23px; }
.pt { gap: 8px; }
.prop { padding-right: 16px; }
.launch { position: absolute; right: 6px; }
.view { justify-content: flex-start; padding-left: 7px; }
.view .launch { position: static; margin-left: 12px; }

.dtabs { display: flex; height: 33px; align-items: flex-end; padding-left: 13px; }
.slash { width: 10px; height: 30px; background: linear-gradient(113deg, transparent 46%, #4b5463 47%, #4b5463 53%, transparent 54%) center / 9px 20px no-repeat; }
.start { height: 30px; padding: 0 9px 0 11px; }
.dactive { display: flex; align-items: center; gap: 10px; height: 30px; padding: 0 15px 0 21px; background: #3b4453; clip-path: polygon(13px 0, 100% 0, calc(100% - 12px) 100%, 0 100%); font-weight: 700; }
.add { height: 30px; width: 40px; }
.dtabs .add { width: 38px; }
.strip { height: 5px; margin: 0 3px; background: #3b4453; }

.viewport { position: relative; flex: 1; display: flex; flex-direction: column; background: #212830; }
.vp-head { display: flex; justify-content: space-between; padding: 5px 15px 0 7px; font-size: 15px; }
.vp-win { display: flex; align-items: center; gap: 11px; }
.scene { position: absolute; left: 50%; top: 50%; margin: -131px 0 0 -98px; }
.cube { position: absolute; right: 5px; top: 69px; display: flex; flex-direction: column; align-items: center; gap: 18px; }
.compass { font: 700 19px "Liberation Sans", sans-serif; fill: #a7aaad; text-anchor: middle; }
.faces { font: 700 10px "Open Sans", sans-serif; fill: #4b4f55; text-anchor: middle; }
.wcs { width: 56px; height: 20px; gap: 6px; margin-right: 10px; border-radius: 4px; background: #9a9eaa; color: #6c707a; font: 13px "Liberation Sans", sans-serif; }
.navbar { position: absolute; right: 6px; top: 258px; width: 40px; height: 259px; box-sizing: border-box; border-radius: 3px; background: #5a5f65; border: 1px solid #6a6f74; display: flex; flex-direction: column; align-items: center; box-shadow: 0 0 2px #111; }
.navbar button { flex-direction: column; gap: 7px; }
.navbar hr { width: 34px; border: 0; border-top: 1px solid #666b70; margin: 6px 0 4px; }
.navbar .dot { align-self: flex-end; width: 11px; height: 11px; margin: 1px 1px 8px; border-radius: 50%; background: #464c54; color: #6b7076; font-size: 11px; }
.navbar .dot.last { margin: auto 1px 1px; }
.car.nav { border-top-color: #444a52; }
.navbar hr + button + button { margin-top: 5px; }
.navbar button + button:has(.nav) + button { margin-top: 5px; }

.console { width: 57%; margin: auto auto 0; }
.history { display: flex; flex-direction: column; align-items: flex-start; gap: 6px; margin: 0 0 4px 79px; font: 15px/19px "Liberation Mono", monospace; }
.history span { padding: 0 3px 0 2px; border-radius: 2px; }
.h0 { background: #515457; color: #9b9ea1; }
.h1 { background: #595b5e; color: #c6c8ca; }
.h2 { background: #636465; color: #f2f2f2; }
.cmd { display: flex; height: 34px; box-sizing: border-box; background: #262c38; padding: 1px 0; }
.cmd-tools { display: flex; align-items: center; width: 72px; gap: 8px; padding-left: 5px; box-sizing: border-box; }
.cmd-tools button:last-child { margin-left: 8px; }
.grip { width: 7px; height: 22px; background: repeating-linear-gradient(transparent 0 2px, #262c38 2px 4px), linear-gradient(90deg, #aaa 2px, transparent 2px 5px, #aaa 5px); }
.cmd-box { flex: 1; display: flex; align-items: center; background: #bbbdbf; border-radius: 2px; padding: 0 6px 0 5px; color: #5f6266; }
.cmd-box .car { border-top-color: #55585c; }
.cmd-box .car.up { border-color: transparent transparent #55585c; }
.recent { gap: 2px; }
.cmd-box input { flex: 1; min-width: 0; outline: 0; padding: 0 8px; font: 15px/20px "Liberation Mono", monospace; color: #333; }
.cmd-box input::placeholder { font-style: italic; color: #66696c; opacity: 1; }

.status { display: flex; justify-content: space-between; height: 39px; padding: 0 5px 0 13px; }
.layouts { display: flex; }
.lactive { height: 30px; width: 86px; background: #3b4453; clip-path: polygon(12px 0, 100% 0, calc(100% - 12px) 100%, 0 100%); font-weight: 700; }
.layout { height: 30px; padding: 0 11px 0 9px; }
.sgroups { display: flex; gap: 3px; padding-top: 2px; }
.pair { display: flex; gap: 1px; }
.sg { display: flex; height: 30px; background: #3b4453; }
.sg button { width: 30px; }
.sg .nar { width: 20px; }
.sg .wide { width: 34px; }
.sg .model { width: 59px; }
.sg .ratio { width: 42px; gap: 5px; font-size: 13px; }
.sg .hot { background: #5f90c3; width: 28px; margin: 1px; }
</style>
